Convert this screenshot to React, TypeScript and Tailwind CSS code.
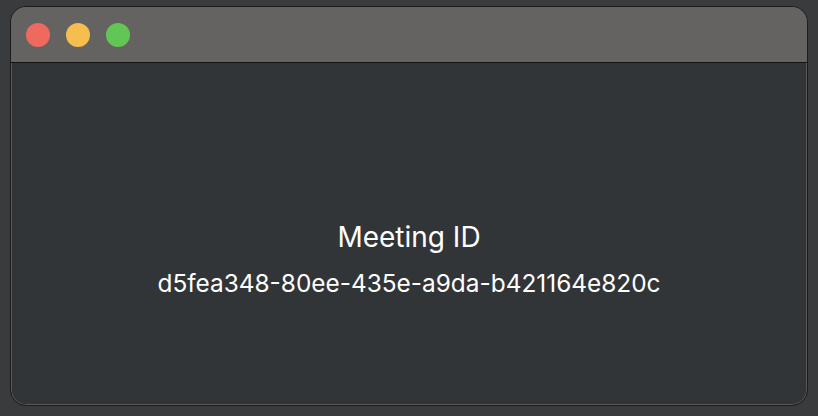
export default function App() {
  return (
    <div className="flex h-[416px] w-[818px] bg-[#3a3b3d] px-[10px] pb-[10px] pt-[6px]">
      <div className="flex flex-1 flex-col overflow-hidden rounded-[16px] border border-[#1c1d1e] bg-[#323538] shadow-[inset_0_0_0_1px_rgba(255,255,255,0.18)]">
        <div className="flex h-[56px] items-center gap-[16px] border-b border-[#111213] bg-[#656361] pl-[15px]">
          <span className="size-[24px] rounded-full bg-[#ee6a5f]" />
          <span className="size-[24px] rounded-full bg-[#f5be4f]" />
          <span className="size-[24px] rounded-full bg-[#62c655]" />
        </div>
        <div className="flex flex-1 flex-col items-center justify-center pt-[48px] font-['Inter',sans-serif] text-white">
          <div className="text-[28px] leading-[36px]">Meeting ID</div>
          <div className="mt-[13px] text-[24.4px] leading-[30px]">d5fea348-80ee-435e-a9da-b421164e820c</div>
        </div>
      </div>
    </div>
  );
}
